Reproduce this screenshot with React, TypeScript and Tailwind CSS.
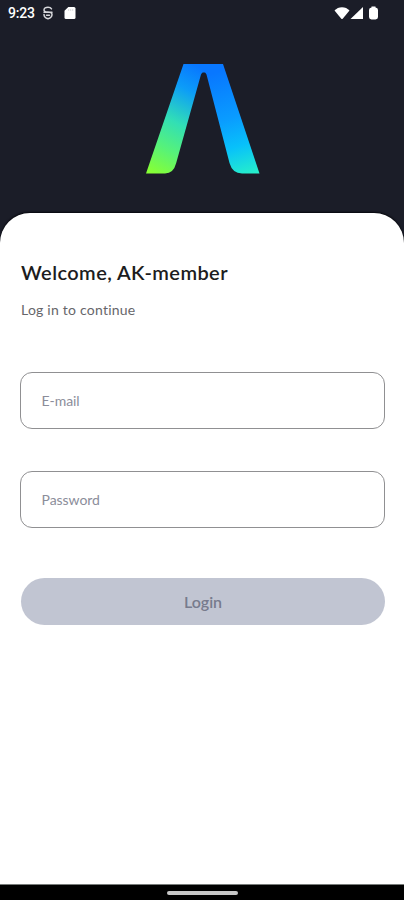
import React, { useState } from "react";

function StatusBar() {
  return (
    <div className="flex h-[26px] items-center justify-between pl-2 pr-[25px] text-white">
      <div className="flex items-center">
        <span className="w-[27px] whitespace-nowrap font-[Roboto,sans-serif] text-[14px] font-medium leading-none tracking-[-0.2px]">9:23</span>
        <svg className="ml-[7px]" width="12" height="14" viewBox="0 0 12 14" fill="none" stroke="#d7d8dc" strokeWidth="1.500" strokeLinecap="round">
          <path d="M9.500 2.900C8.800 1.600 7.500 1.200 6 1.200c-2.300 0-4 1-4 2.700 0 1.500 1.600 2 4 2.100 2.500.1 4 .9 4 2.600 0 2-1.700 3.600-4 4.200-2.300-.6-4-2.200-4-4.200M2 6.300h8M4.500 9.300h3" />
        </svg>
        <svg className="ml-[10px]" width="12" height="14" viewBox="0 0 12 14">
          <path fill="#fff" d="M4.300 1H10q1.500 0 1.500 1.500v9Q11.500 13 10 13H2Q.5 13 .5 11.500V4.800z" />
          <path stroke="#dcdde0" strokeWidth="1" d="M4.700 3v2M6.700 3v2M8.700 3v2" />
        </svg>
      </div>
      <div className="flex items-center">
        <svg width="16" height="14" viewBox="0 0 16 14" fill="#fff">
          <path d="M.5 4.600C4.200 0 11.800 0 15.500 4.600L8.700 12.700q-.7.7-1.400 0z" />
        </svg>
        <svg width="14" height="14" viewBox="0 0 14 14" fill="#fff">
          <path d="M.5 13 13 1v12z" />
        </svg>
        <svg className="ml-[4px]" width="11" height="14" viewBox="0 0 11 14" fill="#fff">
          <path d="M3.500 1.600V.5h4v1.100q2.500.3 2.500 2.400v7q0 2.400-2.500 2.400h-4Q1 13.400 1 11V4q0-2.100 2.500-2.400z" />
        </svg>
      </div>
    </div>
  );
}

function Logo() {
  return (
    <svg className="ml-[145px] mt-[37px] block" width="116" height="112" viewBox="145 63 116 112">
      <defs>
        <linearGradient id="leftLeg" gradientUnits="userSpaceOnUse" x1="207" y1="71" x2="155" y2="174">
          <stop offset="0" stopColor="#0877ff" />
          <stop offset=".22" stopColor="#0c9cf8" />
          <stop offset=".52" stopColor="#32dfb5" />
          <stop offset=".76" stopColor="#56f27a" />
          <stop offset="1" stopColor="#86ff35" />
        </linearGradient>
        <linearGradient id="rightLeg" gradientUnits="userSpaceOnUse" x1="217" y1="72" x2="248" y2="175">
          <stop offset="0" stopColor="#0877ff" />
          <stop offset=".45" stopColor="#0a9cff" />
          <stop offset=".72" stopColor="#08c1fa" />
          <stop offset="1" stopColor="#26efcb" />
        </linearGradient>
      </defs>
      <path fill="url(#leftLeg)" d="M183.500 64H204v8.200q-2.200 0-3 2.300l-24.800 88.500q-2.700 10.500-11.200 10.500H146z" />
      <path fill="url(#rightLeg)" d="M203.500 64H223l36.500 109.500H242q-9.500 0-12.500-10.500L206.500 74.500q-.8-2.300-3-2.300z" />
    </svg>
  );
}

function Field({ label, type }: { label: string; type: string }) {
  const [value, setValue] = useState("");
  return (
    <input
      aria-label={label}
      type={type}
      placeholder={label}
      value={value}
      onChange={(e) => setValue(e.target.value)}
      className="block h-[57px] w-full rounded-[12px] border border-[#909092] bg-white pl-[20.5px] pr-5 text-[14px] tracking-[-0.05px] text-[#1c1c24] outline-none placeholder:text-[#8b8d9a] placeholder:opacity-100"
    />
  );
}

export default function App() {
  return (
    <div className="flex h-[900px] w-full flex-col bg-[#1b1d28] font-[Lato,sans-serif]">
      <header className="h-[213px] shrink-0">
        <StatusBar />
        <Logo />
      </header>
      <main className="flex-1 rounded-t-[30px] bg-white pl-5 pr-[19px] shadow-[0_-1px_2px_#05060b]">
        <h1 className="mt-[45px] whitespace-nowrap pl-px text-[20px] font-semibold leading-7 tracking-[0.42px] text-[#1c1c20]">Welcome, AK-member</h1>
        <p className="mt-[14px] pl-px text-[14px] leading-5 tracking-[0.23px] text-[#66666a]">Log in to continue</p>
        <form className="mt-[52px]" onSubmit={(e) => e.preventDefault()}>
          <div className="flex flex-col gap-[42px]">
            <Field label="E-mail" type="email" />
            <Field label="Password" type="password" />
          </div>
          <div className="mt-[50px] pl-px">
            <button className="block h-[47px] w-full rounded-full bg-[#c1c5d2] text-[16px] font-semibold text-[#777b8d]">Login</button>
          </div>
        </form>
      </main>
      <footer className="flex h-4 shrink-0 justify-center border-t border-[#777b79] bg-black pt-[6px]">
        <div className="h-[4px] w-[71px] rounded-sm bg-[#c7c7c7]" />
      </footer>
    </div>
  );
}
